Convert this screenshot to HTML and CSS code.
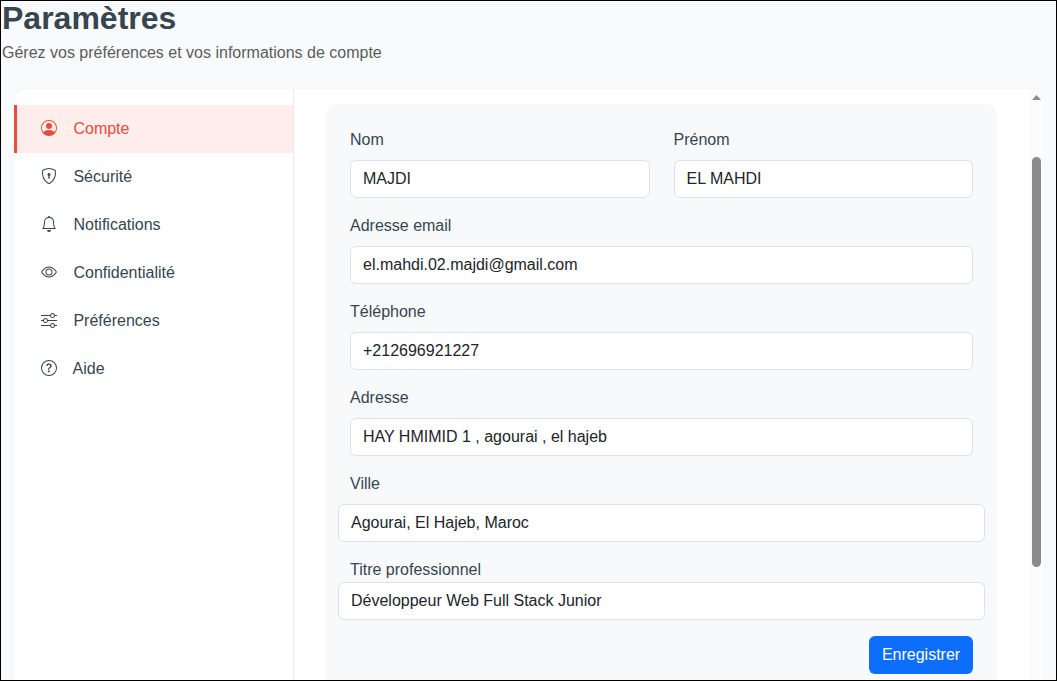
FILE: index.html
```html
<!DOCTYPE html>
<html lang="fr">
<head>
<meta charset="utf-8">
<title>Paramètres</title>
<link rel="stylesheet" href="styles.css">
</head>
<body>
<div class="page">
  <header class="page-header">
    <h1 class="title">Paramètres</h1>
    <p class="subtitle">Gérez vos préférences et vos informations de compte</p>
  </header>
  <main class="card">
    <nav class="sidebar">
      <a class="nav-item active">
        <svg class="icon" viewBox="0 0 16 16"><path d="M11 6a3 3 0 1 1-6 0 3 3 0 0 1 6 0"/><path fill-rule="evenodd" d="M0 8a8 8 0 1 1 16 0A8 8 0 0 1 0 8m8-7a7 7 0 0 0-5.468 11.37C3.242 11.226 4.805 10 8 10s4.757 1.225 5.468 2.37A7 7 0 0 0 8 1"/></svg>
        <span>Compte</span>
      </a>
      <a class="nav-item">
        <svg class="icon" viewBox="0 0 16 16"><path d="M5.338 1.59a61 61 0 0 0-2.837.856.48.48 0 0 0-.328.39c-.554 4.157.726 7.19 2.253 9.188a10.7 10.7 0 0 0 2.287 2.233c.346.244.652.42.893.533q.18.085.293.118a1 1 0 0 0 .101.025 1 1 0 0 0 .1-.025q.114-.034.294-.118c.24-.113.547-.29.893-.533a10.7 10.7 0 0 0 2.287-2.233c1.527-1.997 2.807-5.031 2.253-9.188a.48.48 0 0 0-.328-.39c-.651-.213-1.75-.56-2.837-.855C9.552 1.29 8.531 1.067 8 1.067c-.53 0-1.552.223-2.662.524zM5.072.56C6.157.265 7.31 0 8 0s1.843.265 2.928.56c1.11.3 2.229.655 2.887.87a1.54 1.54 0 0 1 1.044 1.262c.596 4.477-.787 7.795-2.465 9.99a11.8 11.8 0 0 1-2.517 2.453 7 7 0 0 1-1.048.625c-.28.132-.581.24-.829.24s-.548-.108-.829-.24a7 7 0 0 1-1.048-.625 11.8 11.8 0 0 1-2.517-2.453C1.928 10.487.545 7.169 1.141 2.692A1.54 1.54 0 0 1 2.185 1.43 63 63 0 0 1 5.072.56"/><path d="M9.5 6.5a1.5 1.5 0 0 1-1 1.415l.385 1.99a.5.5 0 0 1-.491.595h-.788a.5.5 0 0 1-.49-.595l.384-1.99a1.5 1.5 0 1 1 2-1.415"/></svg>
        <span>Sécurité</span>
      </a>
      <a class="nav-item">
        <svg class="icon" viewBox="0 0 16 16"><path d="M8 16a2 2 0 0 0 2-2H6a2 2 0 0 0 2 2M8 1.918l-.797.161A4 4 0 0 0 4 6c0 .628-.134 2.197-.459 3.742-.16.767-.376 1.566-.663 2.258h10.244c-.287-.692-.502-1.49-.663-2.258C12.134 8.197 12 6.628 12 6a4 4 0 0 0-3.203-3.92zM14.22 12c.223.447.481.801.78 1H1c.299-.199.557-.553.78-1C2.68 10.2 3 6.88 3 6c0-2.42 1.72-4.44 4.005-4.901a1 1 0 1 1 1.99 0A5 5 0 0 1 13 6c0 .88.32 4.2 1.22 6"/></svg>
        <span>Notifications</span>
      </a>
      <a class="nav-item">
        <svg class="icon" viewBox="0 0 16 16"><path d="M16 8s-3-5.500-8-5.500S0 8 0 8s3 5.500 8 5.500S16 8 16 8M1.173 8a13 13 0 0 1 1.660-2.043C4.120 4.668 5.880 3.500 8 3.500s3.879 1.168 5.168 2.457A13 13 0 0 1 14.828 8q-.086.130-.195.288c-.335.480-.830 1.120-1.465 1.755C11.879 11.332 10.119 12.500 8 12.500s-3.879-1.168-5.168-2.457A13 13 0 0 1 1.172 8z"/><path d="M8 5.500a2.500 2.500 0 1 0 0 5 2.500 2.500 0 0 0 0-5M4.500 8a3.500 3.500 0 1 1 7 0 3.500 3.500 0 0 1-7 0"/></svg>
        <span>Confidentialité</span>
      </a>
      <a class="nav-item">
        <svg class="icon" viewBox="0 0 16 16"><path fill-rule="evenodd" d="M11.500 2a1.500 1.500 0 1 0 0 3 1.500 1.500 0 0 0 0-3M9.050 3a2.500 2.500 0 0 1 4.900 0H16v1h-2.050a2.500 2.500 0 0 1-4.900 0H0V3zM4.500 7a1.500 1.500 0 1 0 0 3 1.500 1.500 0 0 0 0-3M2.050 8a2.500 2.500 0 0 1 4.900 0H16v1H6.950a2.500 2.500 0 0 1-4.900 0H0V8zm9.450 4a1.500 1.500 0 1 0 0 3 1.500 1.500 0 0 0 0-3m-2.450 1a2.500 2.500 0 0 1 4.900 0H16v1h-2.050a2.500 2.500 0 0 1-4.900 0H0v-1z"/></svg>
        <span>Préférences</span>
      </a>
      <a class="nav-item help">
        <svg class="icon" viewBox="0 0 16 16"><path d="M8 15A7 7 0 1 1 8 1a7 7 0 0 1 0 14m0 1A8 8 0 1 0 8 0a8 8 0 0 0 0 16"/><path d="M5.255 5.786a.237.237 0 0 0 .241.247h.825c.138 0 .248-.113.266-.250.090-.656.540-1.134 1.342-1.134.686 0 1.314.343 1.314 1.168 0 .635-.374.927-.965 1.371-.673.489-1.206 1.060-1.168 1.987l.003.217a.250.250 0 0 0 .250.246h.811a.250.250 0 0 0 .250-.250v-.105c0-.718.273-.927 1.010-1.486.609-.463 1.244-.977 1.244-2.056 0-1.511-1.276-2.241-2.673-2.241-1.267 0-2.655.590-2.750 2.286m1.557 5.763c0 .533.425.927 1.010.927.609 0 1.028-.394 1.028-.927 0-.552-.420-.940-1.029-.940-.584 0-1.009.388-1.009.940"/></svg>
        <span>Aide</span>
      </a>
    </nav>
    <section class="content">
      <form class="panel">
        <div class="row">
          <div class="field"><label class="label">Nom</label><div class="input">MAJDI</div></div>
          <div class="field"><label class="label">Prénom</label><div class="input">EL MAHDI</div></div>
        </div>
        <div class="field"><label class="label">Adresse email</label><div class="input">el.mahdi.02.majdi@gmail.com</div></div>
        <div class="field"><label class="label">Téléphone</label><div class="input">+212696921227</div></div>
        <div class="field"><label class="label">Adresse</label><div class="input">HAY HMIMID 1 , agourai , el hajeb</div></div>
        <div class="field wide"><label class="label">Ville</label><div class="input">Agourai, El Hajeb, Maroc</div></div>
        <div class="field wide tight"><label class="label">Titre professionnel</label><div class="input">Développeur Web Full Stack Junior</div></div>
        <div class="actions"><button class="btn" type="button">Enregistrer</button></div>
      </form>
    </section>
    <div class="scrollbar">
      <svg class="arrow" viewBox="0 0 9 5"><path d="M4.500 0L9 5H0z"/></svg>
      <div class="thumb"></div>
    </div>
  </main>
</div>
</body>
</html>
```
FILE: styles.css
```css
* { box-sizing: border-box; }

body {
  margin: 0;
  overflow: hidden;
  font: 16px/24px "Liberation Sans", Arial, sans-serif;
}

.page {
  display: flex;
  flex-direction: column;
  height: 681px;
  border: 1px solid #000;
  background: #f9fafc;
  overflow: hidden;
}

.page-header { height: 88px; padding-left: 1px; }

.title {
  margin: -2px 0 0;
  font-size: 32px;
  line-height: 38px;
  font-weight: 700;
  color: #36454f;
}

.subtitle { margin: 4px 0 0; color: #5a5c5e; }

.card {
  display: flex;
  height: 592px;
  margin: 0 12px 0 13px;
  border-radius: 12px 12px 0 0;
  background: #fff;
  box-shadow: 0 0 2px rgba(0, 0, 0, 0.05);
  overflow: hidden;
}

.sidebar {
  flex: none;
  width: 280px;
  padding-top: 16px;
  border-right: 1px solid #e9ecef;
}

.nav-item {
  display: flex;
  align-items: center;
  gap: 16.45px;
  height: 48px;
  padding-left: 24px;
  border-left: 3px solid transparent;
  color: #36454f;
}

.nav-item.help { gap: 15.5px; }
.nav-item.active { background: #fdedeb; border-color: #e74c3c; color: #e74c3c; }

.icon { flex: none; width: 16px; height: 16px; margin-top: -2px; fill: currentColor; }

.content { flex: 1; padding: 15px 32px 0; }

.panel {
  display: flex;
  flex-direction: column;
  gap: 16px;
  height: 600px;
  padding: 24px;
  border-radius: 10px;
  background: #f8f9fb;
}

.row { display: grid; grid-template-columns: 1fr 1fr; gap: 24px; }

.field { display: flex; flex-direction: column; gap: 8px; }
.field.tight { gap: 0; }
.field.wide { margin: 0 -12px; }
.field.wide .label { padding-left: 12px; }

.label { color: #36454f; line-height: 24px; }

.input {
  height: 38px;
  padding: 6px 12px;
  border: 1px solid #dee2e6;
  border-radius: 6px;
  background: #fff;
  color: #212529;
  white-space: nowrap;
}

.actions { display: flex; justify-content: flex-end; }

.btn {
  width: 104px;
  height: 38px;
  padding: 0;
  border: 0;
  border-radius: 6px;
  background: #0d6efd;
  color: #fff;
  font: inherit;
}

.scrollbar {
  display: flex;
  flex: none;
  flex-direction: column;
  align-items: center;
  width: 15px;
  padding-top: 6px;
  background: #fcfcfc;
}

.arrow { width: 9px; height: 5px; fill: #8b8b8b; }
.thumb { width: 9px; height: 410px; margin-top: 57px; border-radius: 5px; background: #8b8b8b; }
```
